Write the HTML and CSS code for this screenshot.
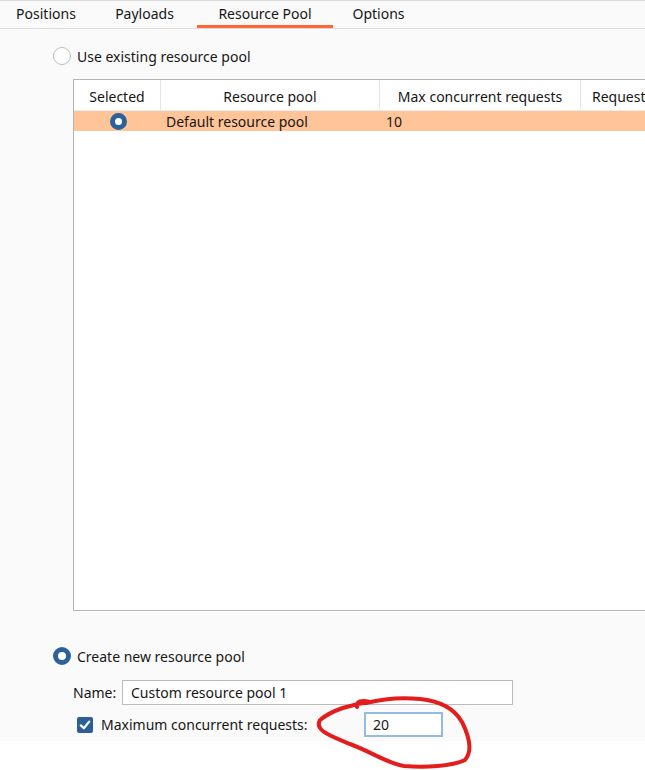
FILE: index.html
```html
<!DOCTYPE html>
<html>
<head>
<meta charset="utf-8">
<link rel="stylesheet" href="styles.css">
</head>
<body>
<div class="app">
  <div class="tabs">
    <div class="tab t1">Positions</div>
    <div class="tab t2">Payloads</div>
    <div class="tab t3 active">Resource Pool</div>
    <div class="tab t4">Options</div>
  </div>
  <div class="content">
    <label class="radio-row top-radio">
      <span class="radio"></span>
      <span class="label">Use existing resource pool</span>
    </label>
    <div class="table">
      <div class="thead">
        <div class="th c1">Selected</div>
        <div class="th c2">Resource pool</div>
        <div class="th c3">Max concurrent requests</div>
        <div class="th c4">Request</div>
      </div>
      <div class="trow">
        <div class="td c1"><span class="radio on small"></span></div>
        <div class="td c2">Default resource pool</div>
        <div class="td c3">10</div>
        <div class="td c4"></div>
      </div>
    </div>
    <label class="radio-row new-radio">
      <span class="radio on"></span>
      <span class="label">Create new resource pool</span>
    </label>
    <div class="name-row">
      <span class="name-label">Name:</span>
      <div class="input name-input">Custom resource pool 1</div>
    </div>
    <div class="check-row">
      <span class="checkbox">
        <svg viewBox="0 0 16 16" width="16" height="16"><path d="M3.8 8.4 L6.8 11.2 L12.2 4.6" fill="none" stroke="#fff" stroke-width="2.2" stroke-linecap="round" stroke-linejoin="round"/></svg>
      </span>
      <span class="check-label">Maximum concurrent requests:</span>
      <div class="input num-input">20</div>
    </div>
  </div>
</div>
<svg class="scribble" viewBox="0 0 645 770" width="645" height="770">
  <path d="M357 707 C356 701 362 700 370 702 C352 704 332 710 320 720 C314 730 330 736 350 744 C372 752 388 764 404 766 C426 768 452 766 465 760 C472 752 470 738 462 722 C454 708 440 701 420 699 C400 697 382 699 366 703" fill="none" stroke="#e31c1c" stroke-width="4" stroke-linecap="round" stroke-linejoin="round"/>
</svg>
</body>
</html>
```
FILE: styles.css
```css
* { box-sizing: border-box; }
html, body { margin: 0; padding: 0; background: #fff; }
body {
  width: 645px;
  height: 770px;
  overflow: hidden;
  position: relative;
  font-family: "Noto Sans", "Open Sans", sans-serif;
  font-size: 14px;
  color: #161616;
}
.app {
  background: #fafafa;
  height: 741px;
  border-top: 1px solid #dcdcdc;
  overflow: hidden;
}
.tabs {
  display: flex;
  height: 28px;
  border-bottom: 1px solid #dcdcdc;
}
.tab {
  text-align: center;
  line-height: 25px;
  height: 27px;
  border-bottom: 3px solid transparent;
}
.t1 { width: 92px; }
.t2 { width: 105px; }
.t3 { width: 136px; }
.t4 { width: 91px; }
.tab.active { border-bottom-color: #ff6633; }

.content {
  display: flex;
  flex-direction: column;
}
.radio-row {
  display: flex;
  align-items: center;
  gap: 6px;
  padding-left: 53px;
  height: 20px;
}
.top-radio { margin-top: 17px; }
.radio {
  width: 18px;
  height: 18px;
  border-radius: 50%;
  border: 1.5px solid #bdbdbd;
  background: #fff;
  flex: none;
}
.radio.on {
  border: 5px solid #2c6299;
  background: #fff;
}
.radio.small {
  width: 17px;
  height: 17px;
  border-width: 5px;
}

.table {
  margin-top: 13px;
  margin-left: 73px;
  width: 620px;
  height: 532px;
  border: 1px solid #b4b4b4;
  border-right: none;
  background: #fff;
  overflow: hidden;
}
.thead {
  display: flex;
  height: 31px;
  border-bottom: 1px solid #ececec;
}
.th {
  text-align: center;
  line-height: 30px;
  padding-top: 2px;
  border-right: 1px solid #e6e6e6;
  white-space: nowrap;
  overflow: hidden;
}
.c1 { width: 87px; flex: none; }
.c2 { width: 219px; flex: none; }
.c3 { width: 201px; flex: none; }
.c4 { flex: 1; border-right: none; text-align: left; padding-left: 11px; }
.trow {
  display: flex;
  height: 20px;
  background: #ffc599;
}
.td {
  line-height: 21px;
  white-space: nowrap;
}
.trow .c1 { display: flex; justify-content: center; align-items: center; padding-left: 2px; }
.trow .c2 { padding-left: 5px; }
.trow .c3 { padding-left: 6px; }

.new-radio { margin-top: 35px; }
.name-row {
  display: flex;
  align-items: center;
  margin-top: 14px;
  padding-left: 73px;
  height: 25px;
}
.name-label { width: 49px; }
.input {
  height: 25px;
  border: 1px solid #bcbcbc;
  background: #fff;
  line-height: 23px;
  padding-left: 8px;
}
.name-input { width: 391px; }
.check-row {
  display: flex;
  align-items: center;
  margin-top: 7px;
  padding-left: 77px;
  height: 25px;
}
.checkbox {
  width: 16px;
  height: 16px;
  border-radius: 2px;
  background: #2b5f98;
  display: flex;
  flex: none;
}
.check-label { margin-left: 8px; width: 263px; }
.num-input {
  width: 79px;
  border: 2px solid #93bbe4;
  line-height: 21px;
  padding-left: 7px;
}

.scribble {
  position: absolute;
  top: 0;
  left: 0;
  pointer-events: none;
}
```
